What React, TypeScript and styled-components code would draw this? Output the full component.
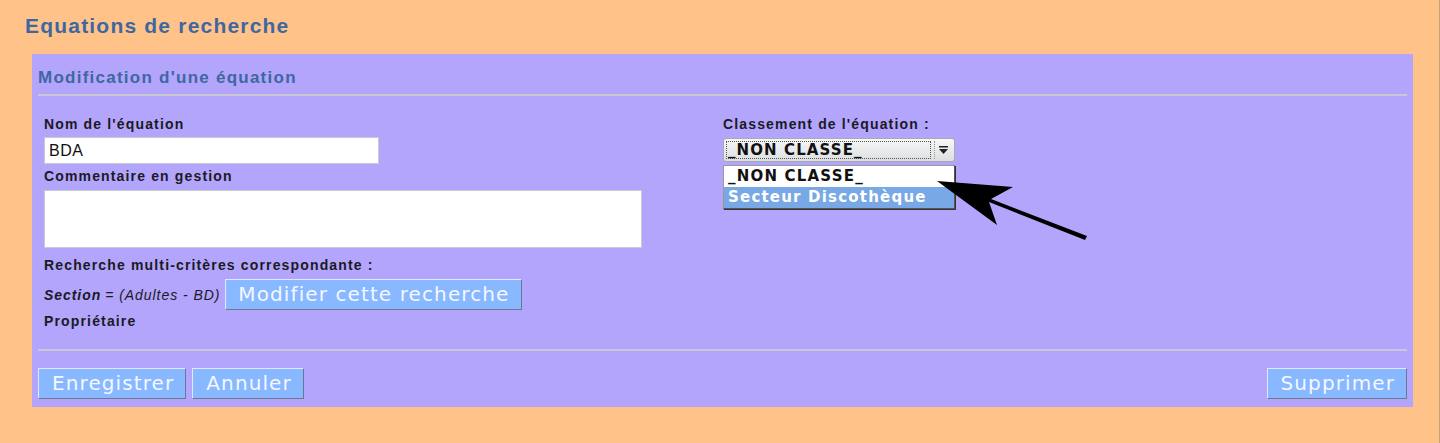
import React from "react";
import styled, { createGlobalStyle } from "styled-components";

const COLORS = {
  page: "#FFC389",
  panel: "#B3A5FC",
  title: "#3E67A1",
  rule: "#CBC8D6",
  text: "#1A1A24",
  button: "#88B8FF",
  selected: "#78A8E6",
};

const GlobalStyle = createGlobalStyle`
  html, body {
    margin: 0;
    padding: 0;
    background: ${COLORS.page};
  }
  body {
    font-family: "Liberation Sans", Arial, sans-serif;
  }
`;

const Page = styled.div`
  width: 1440px;
  height: 443px;
  box-sizing: border-box;
  padding: 12px 27px 0 32px;
  border-right: 1px solid #c9a274;
  position: relative;
  overflow: hidden;
`;

const Title = styled.h1`
  margin: 0 0 0 -7px;
  height: 42px;
  font-size: 21px;
  font-weight: bold;
  color: ${COLORS.title};
  line-height: 27px;
  letter-spacing: 1.2px;
`;

const Panel = styled.div`
  background: ${COLORS.panel};
  width: 1381px;
  height: 353px;
  box-sizing: border-box;
  padding: 0 6px;
`;

const PanelTitle = styled.h2`
  margin: 0;
  padding-top: 14px;
  height: 26px;
  font-size: 17px;
  font-weight: bold;
  color: ${COLORS.title};
  line-height: 20px;
  letter-spacing: 1.25px;
`;

const Rule = styled.div`
  height: 2px;
  background: ${COLORS.rule};
`;

const Form = styled.div`
  display: grid;
  grid-template-columns: 679px 1fr;
  height: 253px;
  padding: 20px 0 0 6px;
  box-sizing: border-box;
`;

const Column = styled.div`
  display: flex;
  flex-direction: column;
`;

const Label = styled.div<{ $gap?: number }>`
  font-size: 14px;
  font-weight: bold;
  color: ${COLORS.text};
  line-height: 17px;
  margin-top: ${(p) => p.$gap ?? 0}px;
  letter-spacing: 1.15px;
`;

const TextInput = styled.div`
  width: 335px;
  height: 27px;
  box-sizing: border-box;
  margin-top: 4px;
  background: #fff;
  border: 1px solid #c4ccd4;
  font-size: 16px;
  line-height: 25px;
  padding-left: 4px;
  color: #111;
  letter-spacing: 0.5px;
`;

const TextArea = styled.div`
  width: 598px;
  height: 58px;
  box-sizing: border-box;
  margin-top: 5px;
  background: #fff;
  border: 1px solid #c4ccd4;
`;

const Criteria = styled.div`
  display: flex;
  align-items: center;
  margin-top: 5px;
  font-size: 14px;
  font-style: italic;
  color: ${COLORS.text};
  letter-spacing: 0.95px;
  b {
    font-weight: bold;
    margin-right: 4px;
  }
`;

const Button = styled.button`
  background: ${COLORS.button};
  color: #f4f7ff;
  font-family: "DejaVu Sans", Verdana, sans-serif;
  font-size: 20px;
  letter-spacing: 1.1px;
  height: 31px;
  padding: 0 11px 0 13px;
  border: 1px solid;
  border-color: #dfe8ff #6f7790 #6f7790 #dfe8ff;
  line-height: 29px;
  cursor: pointer;
`;

const InlineButton = styled(Button)`
  margin-left: 5px;
  width: 297px;
  padding: 0;
`;

const SelectWrap = styled.div`
  position: relative;
  margin-top: 5px;
  width: 232px;
`;

const Select = styled.div`
  height: 24px;
  box-sizing: border-box;
  border: 1px solid #a7acb0;
  border-radius: 3px;
  background: linear-gradient(#f6f7f7, #dcdfe0);
  display: flex;
  padding: 2px;
  font-family: "DejaVu Sans", Verdana, sans-serif;
  font-size: 15px;
  font-weight: bold;
  color: #111;
  letter-spacing: 1.1px;
`;

const SelectValue = styled.div`
  flex: 1;
  border: 1px dotted #555;
  line-height: 16px;
  padding-left: 1px;
`;

const SelectArrow = styled.div`
  width: 17px;
  margin-left: 3px;
  border-left: 1px dotted #999;
  display: flex;
  align-items: center;
  justify-content: center;
`;

const Dropdown = styled.div`
  position: absolute;
  top: 27px;
  left: 0;
  width: 232px;
  box-sizing: border-box;
  border: 1px solid #555;
  border-top-color: #999;
  border-left-color: #999;
  background: #fff;
  font-family: "DejaVu Sans", Verdana, sans-serif;
  font-size: 15px;
  font-weight: bold;
  box-shadow: 1px 1px 0 #333;
`;

const Option = styled.div<{ $selected?: boolean }>`
  height: 21px;
  line-height: 21px;
  padding-left: 4px;
  color: ${(p) => (p.$selected ? "#fff" : "#111")};
  background: ${(p) => (p.$selected ? COLORS.selected : "#fff")};
  letter-spacing: 1.2px;
`;

const Footer = styled.div`
  display: flex;
  gap: 6px;
  padding-top: 17px;
`;

const Spacer = styled.div`
  flex: 1;
`;

const Arrow = styled.svg`
  position: absolute;
  left: 930px;
  top: 175px;
`;

export default function App() {
  return (
    <>
      <GlobalStyle />
      <Page>
        <Title>Equations de recherche</Title>
        <Panel>
          <PanelTitle>Modification d'une équation</PanelTitle>
          <Rule />
          <Form>
            <Column>
              <Label>Nom de l'équation</Label>
              <TextInput>BDA</TextInput>
              <Label $gap={4}>Commentaire en gestion</Label>
              <TextArea />
              <Label $gap={9}>Recherche multi-critères correspondante :</Label>
              <Criteria>
                <b>Section</b> = (Adultes - BD)
                <InlineButton>Modifier cette recherche</InlineButton>
              </Criteria>
              <Label $gap={3}>Propriétaire</Label>
            </Column>
            <Column>
              <Label>Classement de l'équation :</Label>
              <SelectWrap>
                <Select>
                  <SelectValue>_NON CLASSE_</SelectValue>
                  <SelectArrow>
                    <svg width="11" height="10" viewBox="0 0 11 10">
                      <rect x="1" y="1" width="9" height="1.5" fill="#222" />
                      <path d="M1 4 L10 4 L5.5 9 Z" fill="#222" />
                    </svg>
                  </SelectArrow>
                </Select>
                <Dropdown>
                  <Option>_NON CLASSE_</Option>
                  <Option $selected>Secteur Discothèque</Option>
                </Dropdown>
              </SelectWrap>
            </Column>
          </Form>
          <Rule />
          <Footer>
            <Button>Enregistrer</Button>
            <Button>Annuler</Button>
            <Spacer />
            <Button>Supprimer</Button>
          </Footer>
        </Panel>
        <Arrow width="170" height="70" viewBox="930 175 170 70">
          <path d="M937 181 L1013 187 L991 199 L1087 236 L1085 240 L989 202 L997 225 Z" fill="#000" />
        </Arrow>
      </Page>
    </>
  );
}
